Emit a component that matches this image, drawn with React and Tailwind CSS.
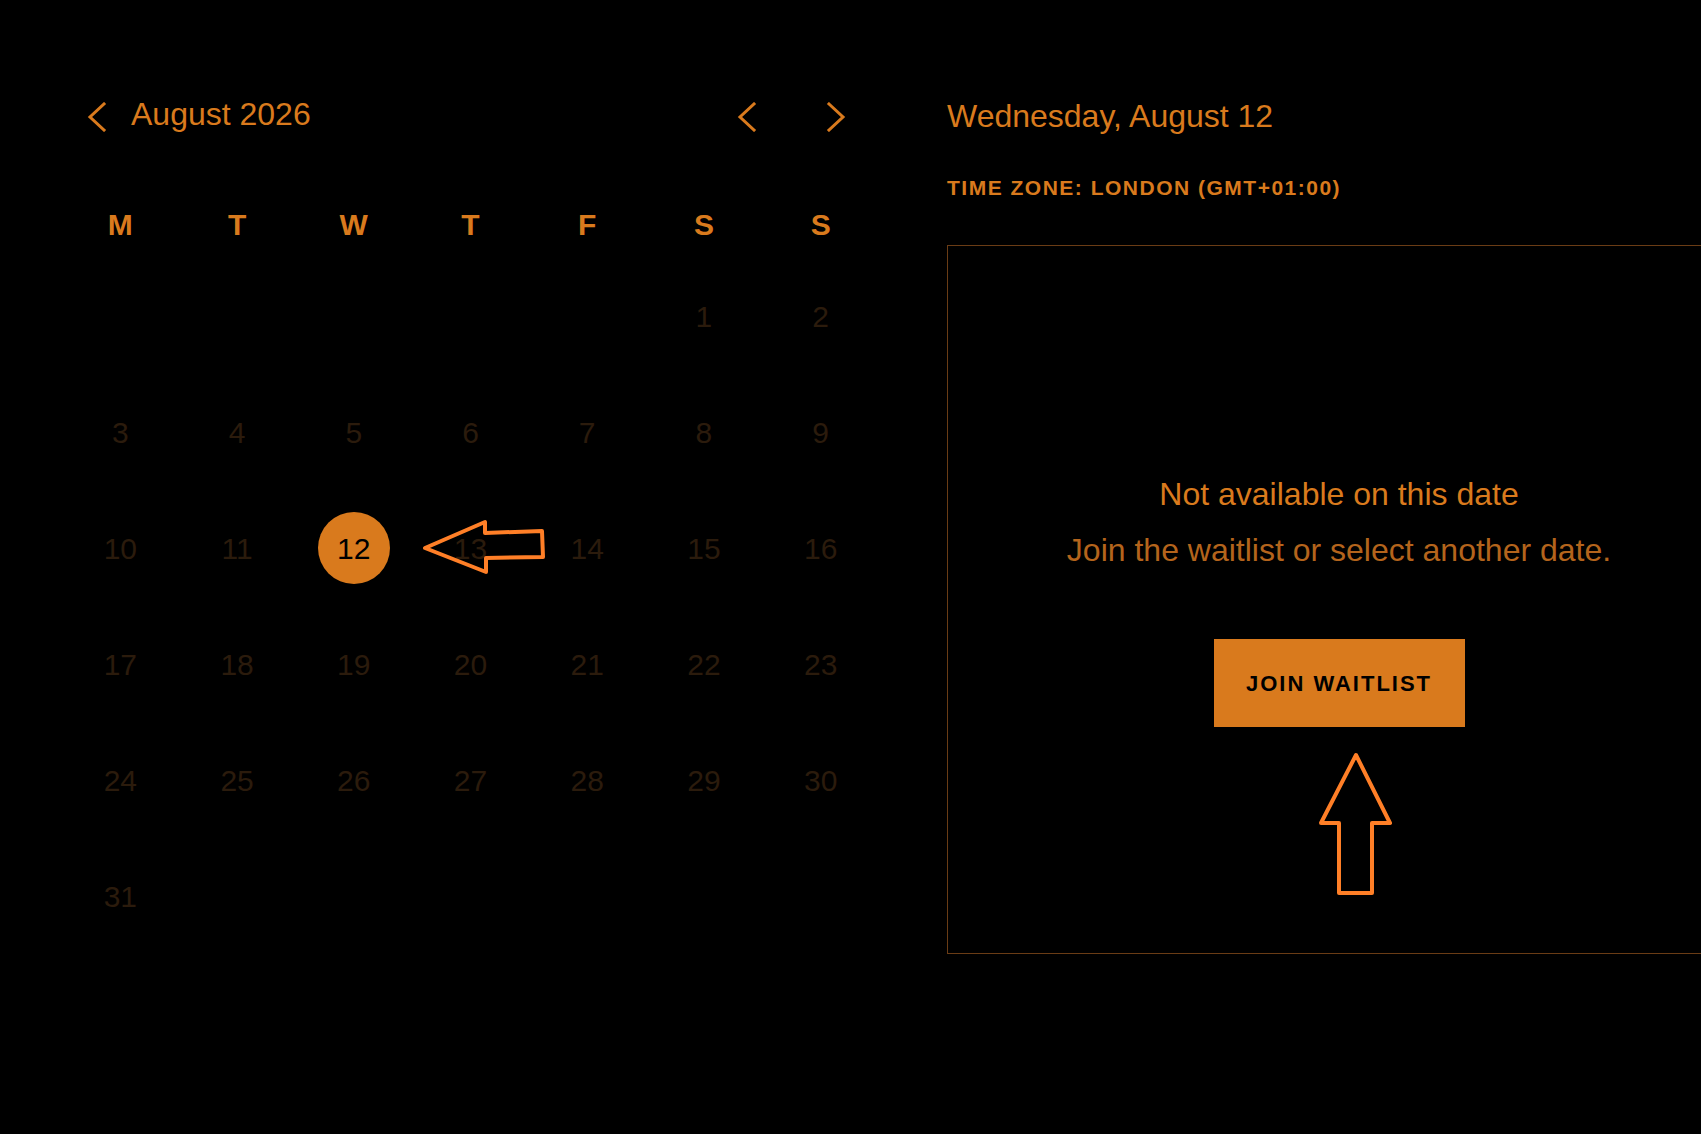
import React from "react";

const ORANGE = "#d97a1d";

const DAYS = ["M", "T", "W", "T", "F", "S", "S"];

// August 2026 starts on a Saturday
function buildCells() {
  const cells = [];
  for (let i = 0; i < 5; i++) cells.push(null);
  for (let d = 1; d <= 31; d++) cells.push(d);
  return cells;
}

function Chevron({ dir = "left" }) {
  const points = dir === "left" ? "17,2 3,15 17,28" : "3,2 17,15 3,28";
  return (
    <svg width="20" height="30" viewBox="0 0 20 30" fill="none" className="shrink-0">
      <polyline points={points} stroke={ORANGE} strokeWidth="3" strokeLinecap="square" />
    </svg>
  );
}

export default function App() {
  const cells = buildCells();
  const selected = 12;

  return (
    <div className="relative h-screen w-full overflow-hidden bg-black font-['Liberation_Sans',Arial,sans-serif]">
      <div className="flex pl-[62px] pt-[87px]">
        {/* Calendar */}
        <div className="w-[817px] shrink-0">
          <div className="flex h-[60px] items-center">
            <button className="ml-[25px]">
              <Chevron dir="left" />
            </button>
            <span className="mb-[6px] ml-[24px] text-[32px] leading-[40px] text-[#d97a1d]">August 2026</span>
            <div className="flex-1" />
            <button>
              <Chevron dir="left" />
            </button>
            <button className="ml-[69px] mr-[33px]">
              <Chevron dir="right" />
            </button>
          </div>

          <div className="mt-[47px] grid h-[60px] grid-cols-7 items-center text-center">
            {DAYS.map((d, i) => (
              <span key={i} className="text-[30px] font-bold text-[#d97a1d]">
                {d}
              </span>
            ))}
          </div>

          <div className="mt-[4px] grid grid-cols-7 auto-rows-[116px]">
            {cells.map((d, i) => (
              <div key={i} className="flex items-center justify-center">
                {d === selected ? (
                  <div className="flex h-[72px] w-[72px] items-center justify-center rounded-full bg-[#d97a1d] text-[30px] text-black">
                    {d}
                  </div>
                ) : (
                  d && <span className="text-[30px] text-[#2b1b0c]">{d}</span>
                )}
              </div>
            ))}
          </div>
        </div>

        {/* Day detail */}
        <div className="ml-[68px] flex shrink-0 flex-col">
          <div className="flex h-[60px] items-center pb-[3px] text-[32px] text-[#d97a1d]">Wednesday, August 12</div>
          <div className="mt-[29px] text-[21px] font-bold leading-[24px] tracking-[1.5px] text-[#d97a1d]">
            TIME ZONE: LONDON (GMT+01:00)
          </div>
          <div className="mt-[45px] flex h-[709px] w-[784px] flex-col items-center border border-[#6a3c15] pt-[228px]">
            <p className="text-[32px] leading-[40px] text-[#d97a1d]">Not available on this date</p>
            <p className="mt-4 text-[32px] leading-[40px] text-[#b4641c]">
              Join the waitlist or select another date.
            </p>
            <button className="mt-[69px] flex h-[88px] w-[251px] items-center justify-center bg-[#d97a1d] text-[22px] font-bold tracking-[2px] text-black">
              JOIN WAITLIST
            </button>
          </div>
        </div>
      </div>

      {/* hand-drawn annotation arrows */}
      <svg className="absolute left-[420px] top-[515px]" width="130" height="62" viewBox="0 0 130 62" fill="none">
        <polygon
          points="5,33 65,7 65,18 122,16 123,42 66,43 66,57"
          stroke="#ff7f27"
          strokeWidth="4"
          strokeLinejoin="round"
        />
      </svg>
      <svg className="absolute left-[1315px] top-[748px]" width="82" height="152" viewBox="0 0 82 152" fill="none">
        <polygon
          points="41,7 75,75 57,75 57,145 24,145 24,75 6,75"
          stroke="#ff7f27"
          strokeWidth="4"
          strokeLinejoin="round"
        />
      </svg>
    </div>
  );
}
